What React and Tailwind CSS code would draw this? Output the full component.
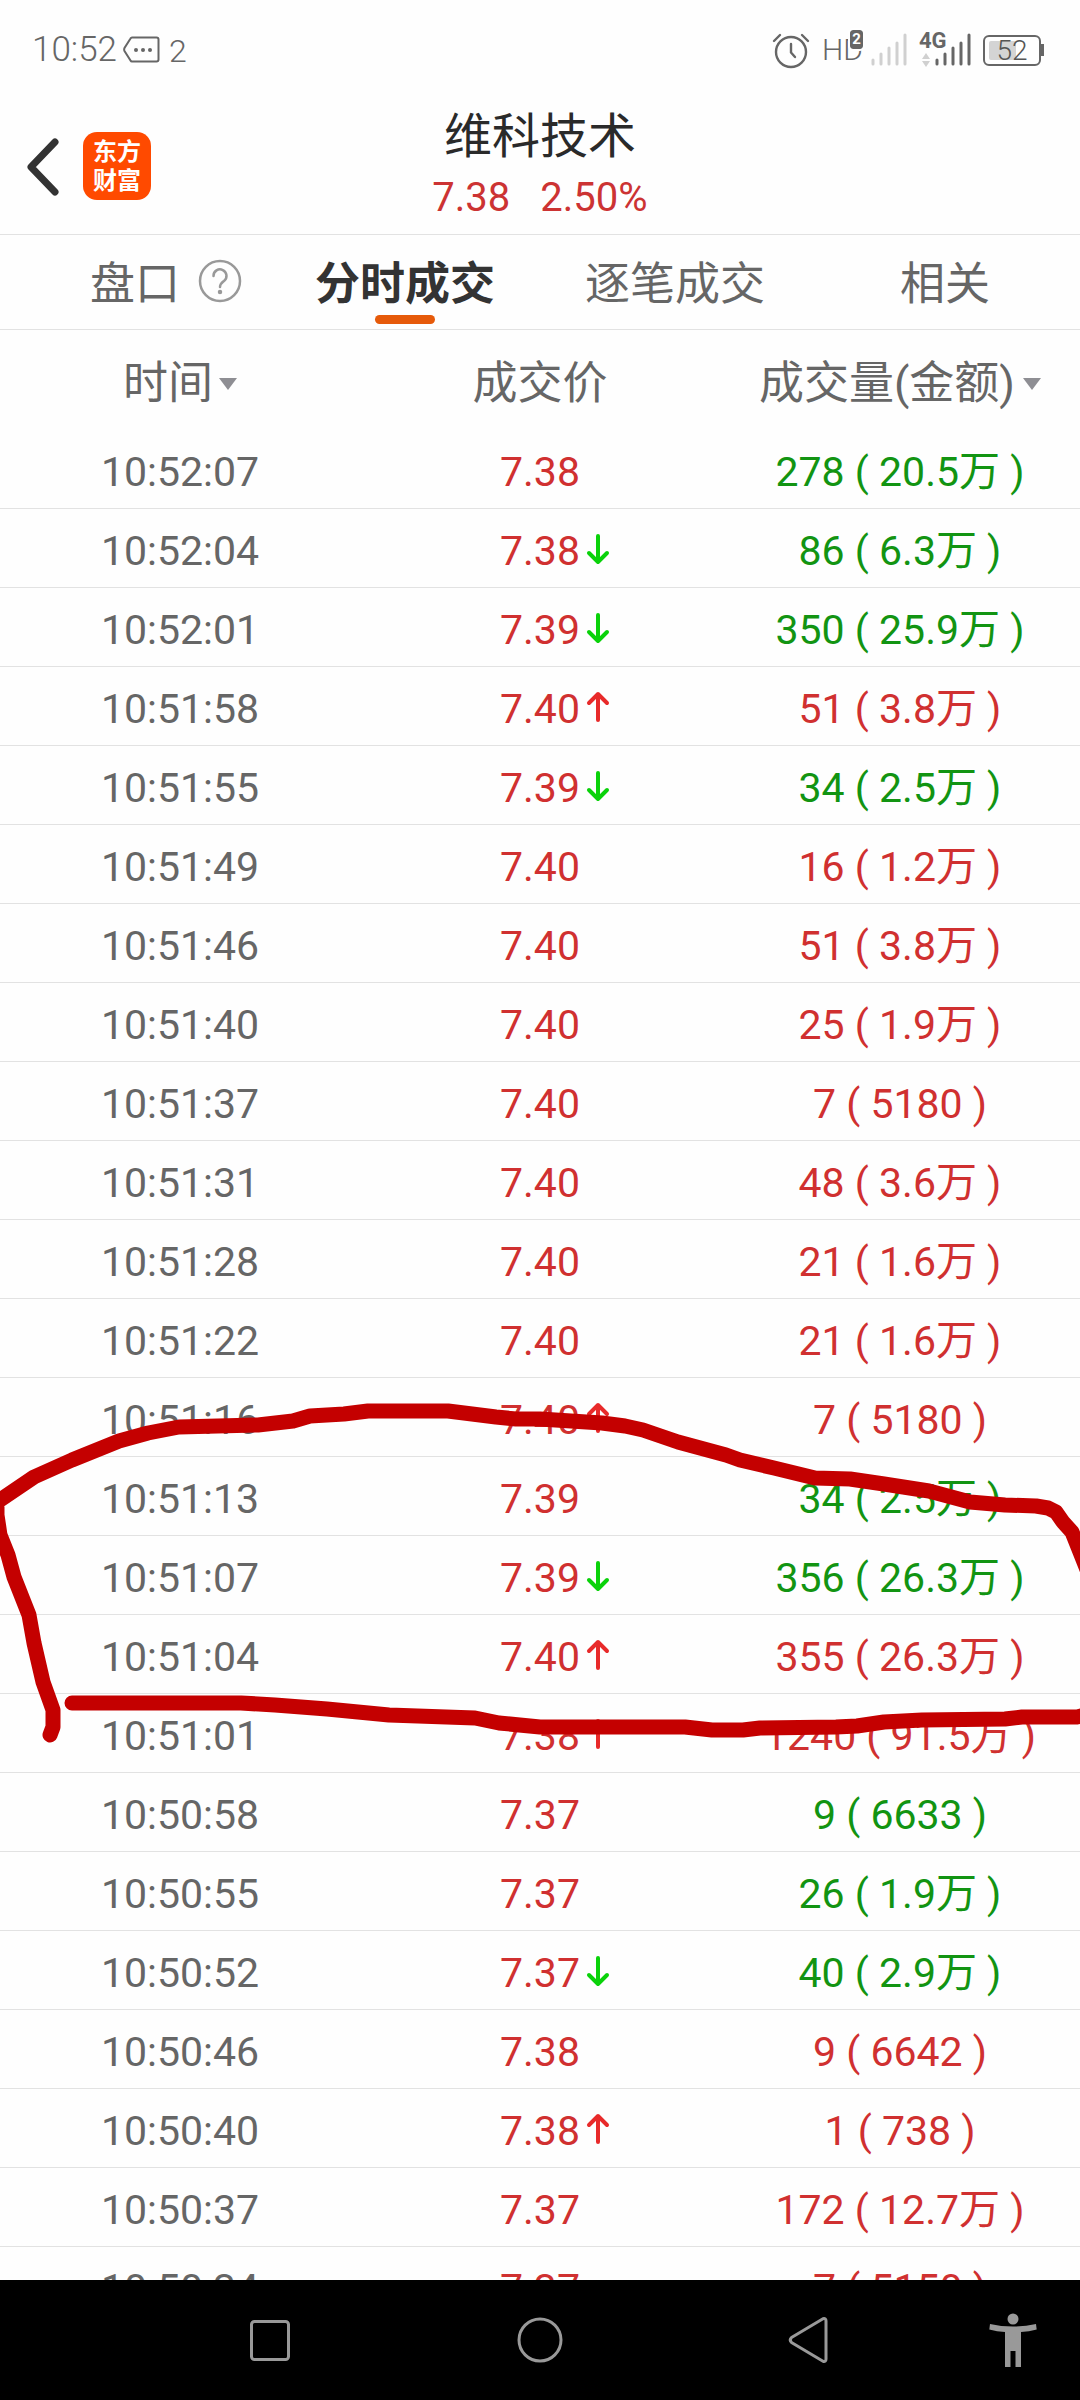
import React from 'react'

const tabs = [
  { label: '盘口', help: true },
  { label: '分时成交', active: true },
  { label: '逐笔成交' },
  { label: '相关' }
]

const trades = [
  { time: '10:52:07', price: '7.38', volume: '278', amount: '20.5万', side: 'sell' },
  { time: '10:52:04', price: '7.38', move: 'down', volume: '86', amount: '6.3万', side: 'sell' },
  { time: '10:52:01', price: '7.39', move: 'down', volume: '350', amount: '25.9万', side: 'sell' },
  { time: '10:51:58', price: '7.40', move: 'up', volume: '51', amount: '3.8万', side: 'buy' },
  { time: '10:51:55', price: '7.39', move: 'down', volume: '34', amount: '2.5万', side: 'sell' },
  { time: '10:51:49', price: '7.40', volume: '16', amount: '1.2万', side: 'buy' },
  { time: '10:51:46', price: '7.40', volume: '51', amount: '3.8万', side: 'buy' },
  { time: '10:51:40', price: '7.40', volume: '25', amount: '1.9万', side: 'buy' },
  { time: '10:51:37', price: '7.40', volume: '7', amount: '5180', side: 'buy' },
  { time: '10:51:31', price: '7.40', volume: '48', amount: '3.6万', side: 'buy' },
  { time: '10:51:28', price: '7.40', volume: '21', amount: '1.6万', side: 'buy' },
  { time: '10:51:22', price: '7.40', volume: '21', amount: '1.6万', side: 'buy' },
  { time: '10:51:16', price: '7.40', move: 'up', volume: '7', amount: '5180', side: 'buy' },
  { time: '10:51:13', price: '7.39', volume: '34', amount: '2.5万', side: 'sell' },
  { time: '10:51:07', price: '7.39', move: 'down', volume: '356', amount: '26.3万', side: 'sell' },
  { time: '10:51:04', price: '7.40', move: 'up', volume: '355', amount: '26.3万', side: 'buy' },
  { time: '10:51:01', price: '7.38', move: 'up', volume: '1240', amount: '91.5万', side: 'buy' },
  { time: '10:50:58', price: '7.37', volume: '9', amount: '6633', side: 'sell' },
  { time: '10:50:55', price: '7.37', volume: '26', amount: '1.9万', side: 'sell' },
  { time: '10:50:52', price: '7.37', move: 'down', volume: '40', amount: '2.9万', side: 'sell' },
  { time: '10:50:46', price: '7.38', volume: '9', amount: '6642', side: 'buy' },
  { time: '10:50:40', price: '7.38', move: 'up', volume: '1', amount: '738', side: 'buy' },
  { time: '10:50:37', price: '7.37', volume: '172', amount: '12.7万', side: 'buy' },
  { time: '10:50:34', price: '7.37', volume: '7', amount: '5150', side: 'buy' }
]

function SignalBars({ className }) {
  return (
    <svg className={className} width="36" height="34" viewBox="0 0 36 34" stroke="currentColor" strokeWidth="3" strokeLinecap="round">
      <path d="M2 27v4M10 21v10M18 15v16M26 10v21M34 2v29" />
    </svg>
  )
}

function StatusBar() {
  return (
    <div className="h-[98px] shrink-0 flex items-start justify-between pl-8 pr-9 pt-[30px] text-[#666] font-light">
      <div className="flex items-center h-10">
        <span className="text-[35px] leading-10">10:52</span>
        <svg className="ml-1.5" width="38" height="28" viewBox="0 0 38 28" fill="none" stroke="currentColor" strokeWidth="2">
          <path d="M9 1.500h24.500a2 2 0 0 1 2 2v20a2 2 0 0 1-2 2H9q-1 0-1.500-1L1.500 15q-.7-1.500 0-3L7.500 2.500q.5-1 1.500-1z" />
          <g fill="currentColor" stroke="none">
            <circle cx="13" cy="14" r="2" />
            <circle cx="20" cy="14" r="2" />
            <circle cx="27" cy="14" r="2" />
          </g>
        </svg>
        <span className="ml-2 pt-0.5 text-[32px] leading-10">2</span>
      </div>
      <div className="flex items-center h-10">
        <svg width="38" height="38" viewBox="0 0 38 38" fill="none" stroke="currentColor" strokeWidth="2.400" strokeLinecap="round" strokeLinejoin="round">
          <circle cx="19" cy="21" r="15" />
          <path d="M19 13v8.500l4 4.500M2 10l6-6M36 10l-6-6" />
        </svg>
        <span className="relative ml-3 text-[30px] leading-10">
          HD
          <span className="absolute right-0 top-0 h-[19px] w-[13px] rounded-[3px] bg-[#666] text-center text-[15px] leading-[19px] font-bold text-white outline-2 outline-white">2</span>
        </span>
        <SignalBars className="ml-2 text-[#d0d0d0]" />
        <div className="relative ml-7">
          <SignalBars />
          <span className="absolute -left-4 top-0 text-[22px] leading-4 font-bold">4G</span>
          <svg className="absolute -left-3.5 top-5" width="10" height="14" viewBox="0 0 10 14" fill="#d0d0d0">
            <path d="M5 0l4 6H1zM5 14l4-6H1z" />
          </svg>
        </div>
        <div className="ml-3 flex items-center">
          <div className="relative h-[31px] w-[58px] rounded-md border-2 border-[#666]">
            <div className="absolute left-1 top-[4px] h-[19px] w-[27px] rounded-xs bg-[#d4d4d4]" />
            <span className="relative block text-center text-[28px] leading-7 text-[#555]">52</span>
          </div>
          <div className="h-3 w-[3px] bg-[#666]" />
        </div>
      </div>
    </div>
  )
}

function Header() {
  return (
    <header className="relative h-[137px] shrink-0 border-b border-[#e2e2e2] flex flex-col items-center">
      <div className="absolute left-6 top-[34px] flex items-center gap-[23px]">
        <button type="button" aria-label="返回">
          <svg width="36" height="60" viewBox="0 0 36 60" fill="none" stroke="#333" strokeWidth="7" strokeLinecap="round" strokeLinejoin="round">
            <path d="M31 6L7 31L31 56" />
          </svg>
        </button>
        <a href="#home" className="h-[68px] w-[68px] rounded-[14px] bg-[#ff4a00] text-white text-[24px] leading-[29px] font-bold text-center pt-1.5">
          <span className="block">东方</span>
          <span className="block">财富</span>
        </a>
      </div>
      <h1 className="pt-3.5 text-[48px] leading-[50px] text-[#2a2a2a]">维科技术</h1>
      <p className="flex gap-[30px] pt-2 text-[40px] leading-[56px] text-[#cc3333]">
        <span>7.38</span>
        <span>2.50%</span>
      </p>
    </header>
  )
}

function Tabs() {
  return (
    <nav className="h-[95px] shrink-0 grid grid-cols-4 border-b border-[#e2e2e2]">
      {tabs.map((tab) => (
        <button
          key={tab.label}
          type="button"
          className={`relative flex justify-center pt-4 text-[45px] leading-[68px] ${tab.active ? 'font-bold text-[#333]' : 'text-[#666]'}`}
        >
          <span className="relative">
            {tab.label}
            {tab.help && (
              <svg className="absolute left-full top-2 ml-[18px]" width="44" height="44" viewBox="0 0 44 44" fill="none" stroke="#999" strokeWidth="2.500" strokeLinecap="round">
                <circle cx="22" cy="22" r="20" />
                <path d="M15.500 17a6.500 6.500 0 1 1 10.500 5c-2.500 2-4 3-4 6" />
                <circle cx="22" cy="33" r="1" fill="#999" />
              </svg>
            )}
          </span>
          {tab.active && <span className="absolute bottom-[5px] h-[9px] w-[60px] rounded-full bg-[#e65a0a]" />}
        </button>
      ))}
    </nav>
  )
}

function SortCaret() {
  return (
    <svg width="18" height="12" viewBox="0 0 18 12" fill="#8e8e93">
      <path d="M0 0h18L9 12z" />
    </svg>
  )
}

function MoveArrow({ move }) {
  const up = move === 'up'
  return (
    <svg
      className={`absolute left-full top-2.5 ml-1.5 ${up ? 'text-[#e82a2a]' : 'text-[#0ad20a]'}`}
      width="24"
      height="32"
      viewBox="0 0 24 32"
      fill="none"
      stroke="currentColor"
      strokeWidth="4"
      strokeLinecap="round"
      strokeLinejoin="round"
    >
      <path d={up ? 'M12 29V3M3 12l9-9 9 9' : 'M12 3v26M3 20l9 9 9-9'} />
    </svg>
  )
}

function TradeTable() {
  return (
    <table className="w-full table-fixed border-separate border-spacing-0 text-center">
      <thead>
        <tr className="h-[100px] text-[45px] text-[#666]">
          <th className="p-0 pt-2 font-normal">
            <button type="button" className="inline-flex items-center gap-1.5 leading-[68px]">
              时间
              <SortCaret />
            </button>
          </th>
          <th className="p-0 pt-2 font-normal leading-[68px]">成交价</th>
          <th className="p-0 pt-2 font-normal">
            <button type="button" className="inline-flex items-center gap-2 leading-[68px]">
              成交量(金额)
              <SortCaret />
            </button>
          </th>
        </tr>
      </thead>
      <tbody className="text-[41px] leading-[56px]">
        {trades.map((trade) => (
          <tr key={trade.time} className="h-[79px]">
            <td className="border-b border-[#e2e2e2] p-0 pt-1.5 text-[#666]">{trade.time}</td>
            <td className="border-b border-[#e2e2e2] p-0 pt-1.5 text-[#d03030]">
              <span className="relative inline-block">
                {trade.price}
                {trade.move && <MoveArrow move={trade.move} />}
              </span>
            </td>
            <td className={`border-b border-[#e2e2e2] p-0 pt-1.5 ${trade.side === 'sell' ? 'text-[#129412]' : 'text-[#d03030]'}`}>
              {trade.volume} ( {trade.amount} )
            </td>
          </tr>
        ))}
      </tbody>
    </table>
  )
}

// Hand-drawn marker around the 10:51 trades
function Scribble() {
  return (
    <svg
      className="pointer-events-none absolute left-0 top-[1070px] w-full"
      viewBox="0 1400 1080 350"
      fill="none"
      stroke="#c40000"
      strokeWidth="15"
      strokeLinecap="round"
      strokeLinejoin="round"
    >
      <path d="M50 1735L53 1727V1710L43 1682L34 1643L29 1615L14 1577L8 1555L0 1535L-3 1515V1502L3 1498L34 1477L72 1460L119 1441L148 1433L179 1427L258 1425L293 1421L310 1416L344 1414L368 1411H448L496 1417L516 1419L540 1419L602 1423L625 1426L643 1430L678 1442L726 1455L740 1460L774 1468L815 1478L850 1479L884 1484L929 1491L970 1502L1005 1505L1036 1506L1048 1508L1056 1512L1063 1522L1072 1532L1080 1552L1088 1572" />
      <path d="M72 1703H241L275 1705L327 1709L389 1715L475 1718L499 1723L540 1727H685L712 1730H743L760 1728L836 1727L857 1726L884 1722L922 1720L1005 1719L1022 1717H1077L1090 1714" />
    </svg>
  )
}

function NavBar() {
  return (
    <nav className="h-[120px] shrink-0 grid grid-cols-[1fr_2fr_2fr_2fr_1fr] bg-black text-[#999]">
      <span />
      <button type="button" aria-label="最近任务" className="flex items-center justify-center">
        <svg width="48" height="48" viewBox="0 0 48 48" fill="none" stroke="currentColor" strokeWidth="3">
          <rect x="5.500" y="5.500" width="37" height="38" rx="3" />
        </svg>
      </button>
      <button type="button" aria-label="主页" className="flex items-center justify-center">
        <svg width="48" height="48" viewBox="0 0 48 48" fill="none" stroke="currentColor" strokeWidth="3">
          <circle cx="24" cy="24" r="21" />
        </svg>
      </button>
      <button type="button" aria-label="后退" className="flex items-center justify-center">
        <svg width="48" height="48" viewBox="0 0 48 48" fill="none" stroke="currentColor" strokeWidth="3" strokeLinejoin="round">
          <path d="M37 2.700L5.500 21.500q-2.500 2.500 0 5L37 45.300q3 .7 3-2.300V5q0-3-3-2.300z" />
        </svg>
      </button>
      <button type="button" aria-label="无障碍" className="flex items-center justify-center">
        <svg width="48" height="54" viewBox="0 0 48 54" fill="currentColor">
          <circle cx="24" cy="6" r="5.500" />
          <path d="M1 11q11 2.500 23 2.500T47 11l.7 5.500Q40 18.500 32 19v35h-5.500V38h-5v16H16V19Q8 18.500.3 16.500z" />
        </svg>
      </button>
    </nav>
  )
}

export default function App() {
  return (
    <div className="h-screen w-full flex flex-col overflow-hidden bg-[#fefefe] font-[Roboto,'Noto_Sans_CJK_SC',sans-serif]">
      <StatusBar />
      <Header />
      <Tabs />
      <main className="relative min-h-0 flex-1 overflow-hidden">
        <TradeTable />
        <Scribble />
      </main>
      <NavBar />
    </div>
  )
}
